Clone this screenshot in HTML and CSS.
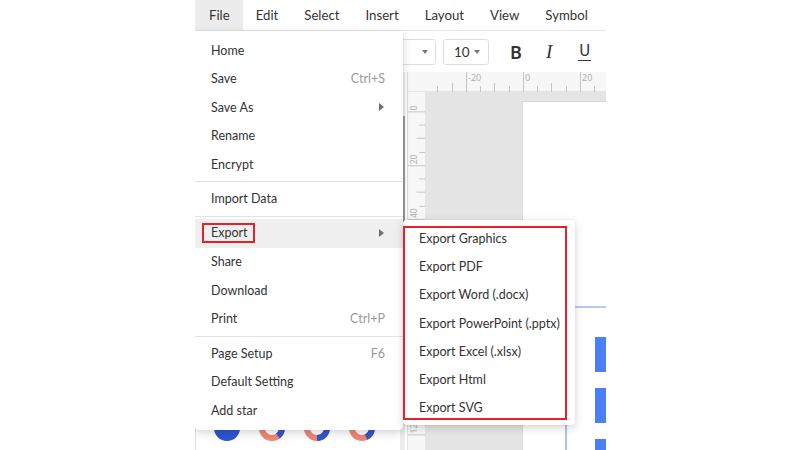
FILE: index.html
```html
<!DOCTYPE html>
<html>
<head>
<meta charset="utf-8">
<link rel="stylesheet" href="styles.css">
</head>
<body>
<div class="app">
  <div class="menubar">
    <span class="mtab active">File</span>
    <span class="mtab">Edit</span>
    <span class="mtab">Select</span>
    <span class="mtab">Insert</span>
    <span class="mtab">Layout</span>
    <span class="mtab">View</span>
    <span class="mtab">Symbol</span>
  </div>
  <div class="toolbar">
    <div class="select font-select"><span class="caret"></span></div>
    <div class="select size-select"><span class="val">10</span><span class="caret"></span></div>
    <span class="tbtn bold">B</span>
    <span class="tbtn italic">I</span>
    <span class="tbtn under">U</span>
  </div>
  <div class="main">
    <div class="panel">
      <div class="panel-content">
        <div class="shapes">
          <svg class="shape" viewBox="0 0 28 28"><circle cx="14" cy="14" r="13" fill="#2d57cf"/><path d="M14 1a13 13 0 0 1 13 13h-13z" fill="#6d8fe6"/></svg>
          <svg class="shape" viewBox="0 0 28 28"><circle cx="14" cy="14" r="10" fill="none" stroke="#ef8676" stroke-width="6"/><path d="M24 14a10 10 0 0 1-4 8" fill="none" stroke="#3358cc" stroke-width="6"/></svg>
          <svg class="shape" viewBox="0 0 28 28"><circle cx="14" cy="14" r="10" fill="none" stroke="#ef8676" stroke-width="6"/><path d="M24 14a10 10 0 0 1-10 10" fill="none" stroke="#3358cc" stroke-width="6"/><path d="M4 14a10 10 0 0 1 3-7" fill="none" stroke="#f2b25a" stroke-width="6"/></svg>
          <svg class="shape" viewBox="0 0 28 28"><circle cx="14" cy="14" r="10" fill="none" stroke="#ef8676" stroke-width="6"/><path d="M24 14a10 10 0 0 1-6 9" fill="none" stroke="#3358cc" stroke-width="6"/></svg>
        </div>
      </div>
      <div class="scrolltrack"><div class="thumb"></div></div>
    </div>
    <div class="stage">
      <div class="ruler-row">
        <div class="corner"></div>
        <svg class="hruler" width="181" height="20" viewBox="0 0 181 20">
          <g stroke="#c4c4c4" stroke-width="1">
            <line x1="12.5" y1="14" x2="12.5" y2="20"/>
            <line x1="27.5" y1="11" x2="27.5" y2="20"/>
            <line x1="41.5" y1="0" x2="41.5" y2="20"/>
            <line x1="55.5" y1="14" x2="55.5" y2="20"/>
            <line x1="69.5" y1="11" x2="69.5" y2="20"/>
            <line x1="84.5" y1="14" x2="84.5" y2="20"/>
            <line x1="98.5" y1="0" x2="98.5" y2="20"/>
            <line x1="112.5" y1="14" x2="112.5" y2="20"/>
            <line x1="126.5" y1="11" x2="126.5" y2="20"/>
            <line x1="141.5" y1="14" x2="141.5" y2="20"/>
            <line x1="155.5" y1="0" x2="155.5" y2="20"/>
            <line x1="169.5" y1="14" x2="169.5" y2="20"/>
          </g>
          <g class="rtext">
            <text x="43" y="9">-20</text>
            <text x="100" y="9">0</text>
            <text x="157" y="9">20</text>
          </g>
        </svg>
      </div>
      <div class="canvas-row">
        <svg class="vruler" width="18" height="358" viewBox="0 0 18 358">
          <g stroke="#c4c4c4" stroke-width="1">
            <line x1="0" y1="10.5" x2="18" y2="10.5"/>
            <line x1="12" y1="24.5" x2="18" y2="24.5"/>
            <line x1="9" y1="38.5" x2="18" y2="38.5"/>
            <line x1="12" y1="53.5" x2="18" y2="53.5"/>
            <line x1="0" y1="67.5" x2="18" y2="67.5"/>
            <line x1="12" y1="81.5" x2="18" y2="81.5"/>
            <line x1="9" y1="95.5" x2="18" y2="95.5"/>
            <line x1="12" y1="110.5" x2="18" y2="110.5"/>
            <line x1="0" y1="124.5" x2="18" y2="124.5"/>
            <line x1="12" y1="138.5" x2="18" y2="138.5"/>
            <line x1="9" y1="152.5" x2="18" y2="152.5"/>
            <line x1="12" y1="167.5" x2="18" y2="167.5"/>
            <line x1="0" y1="181.5" x2="18" y2="181.5"/>
            <line x1="12" y1="195.5" x2="18" y2="195.5"/>
            <line x1="9" y1="209.5" x2="18" y2="209.5"/>
            <line x1="12" y1="224.5" x2="18" y2="224.5"/>
            <line x1="0" y1="238.5" x2="18" y2="238.5"/>
            <line x1="12" y1="252.5" x2="18" y2="252.5"/>
            <line x1="9" y1="266.5" x2="18" y2="266.5"/>
            <line x1="12" y1="281.5" x2="18" y2="281.5"/>
            <line x1="0" y1="295.5" x2="18" y2="295.5"/>
            <line x1="12" y1="309.5" x2="18" y2="309.5"/>
            <line x1="9" y1="323.5" x2="18" y2="323.5"/>
            <line x1="12" y1="338.5" x2="18" y2="338.5"/>
            <line x1="0" y1="352.5" x2="18" y2="352.5"/>
          </g>
          <g class="rtext">
            <text transform="translate(9 9) rotate(-90)">0</text>
            <text transform="translate(9 66) rotate(-90)">20</text>
            <text transform="translate(9 123) rotate(-90)">40</text>
            <text transform="translate(9 351) rotate(-90)">120</text>
          </g>
        </svg>
        <div class="canvas">
          <div class="page">
            <div class="dline"></div>
            <div class="vline"></div>
            <div class="dbox b1"></div>
            <div class="dbox b2"></div>
            <div class="dbox b3"></div>
          </div>
        </div>
      </div>
    </div>
  </div>

  <div class="dropdown">
    <div class="mi"><span>Home</span></div>
    <div class="mi"><span>Save</span><span class="kbd">Ctrl+S</span></div>
    <div class="mi"><span>Save As</span><span class="arrow"></span></div>
    <div class="mi"><span>Rename</span></div>
    <div class="mi"><span>Encrypt</span></div>
    <div class="sep"></div>
    <div class="mi"><span>Import Data</span></div>
    <div class="sep"></div>
    <div class="mi hover"><span class="mark">Export</span><span class="arrow"></span></div>
    <div class="mi"><span>Share</span></div>
    <div class="mi"><span>Download</span></div>
    <div class="mi"><span>Print</span><span class="kbd">Ctrl+P</span></div>
    <div class="sep"></div>
    <div class="mi"><span>Page Setup</span><span class="kbd">F6</span></div>
    <div class="mi"><span>Default Setting</span></div>
    <div class="mi"><span>Add star</span></div>
  </div>

  <div class="submenu">
    <div class="si">Export Graphics</div>
    <div class="si">Export PDF</div>
    <div class="si">Export Word (.docx)</div>
    <div class="si">Export PowerPoint (.pptx)</div>
    <div class="si">Export Excel (.xlsx)</div>
    <div class="si">Export Html</div>
    <div class="si">Export SVG</div>
    <div class="redbox"></div>
  </div>
</div>
</body>
</html>
```

FILE: styles.css
```css
* { box-sizing: border-box; }
html, body {
  margin: 0;
  padding: 0;
  background: #fff;
}
body {
  width: 800px;
  height: 450px;
  overflow: hidden;
  font-family: "Lato", "Noto Sans", sans-serif;
  color: #333;
}
.app {
  position: relative;
  margin-left: 195px;
  width: 411px;
  height: 450px;
  display: flex;
  flex-direction: column;
  overflow: hidden;
}
.menubar {
  height: 31px;
  flex: none;
  display: flex;
  border-bottom: 1px solid #e6e6e6;
  font-size: 13.2px;
}
.mtab {
  padding: 0 13px;
  line-height: 30px;
  color: #333;
}
.mtab.active { background: #ececec; padding-left: 14px; }

.toolbar {
  height: 41px;
  flex: none;
  display: flex;
  align-items: center;
  padding-top: 1px;
}
.select {
  height: 26px;
  flex: none;
  border: 1px solid #dedede;
  border-radius: 3px;
  display: flex;
  align-items: center;
}
.font-select { width: 100px; margin-left: 141px; justify-content: flex-end; padding-right: 7px; }
.size-select { width: 46px; margin-left: 7px; padding-left: 10px; font-size: 13.5px; }
.size-select .val { flex: 1; }
.size-select .caret { margin-right: 8px; }
.caret {
  width: 0; height: 0;
  border-left: 3.5px solid transparent;
  border-right: 3.5px solid transparent;
  border-top: 4px solid #777;
}
.tbtn {
  font-size: 18px;
  color: #333;
  line-height: 20px;
}
.bold { margin-left: 21px; font-weight: 600; font-family: "Noto Sans", sans-serif; }
.italic { margin-left: 24px; font-family: "Liberation Serif", serif; font-style: italic; font-size: 19px; }
.under { margin-left: 26px; font-family: "DejaVu Sans", sans-serif; font-size: 15px; border-bottom: 1.5px solid #333; line-height: 15px; padding: 0 1px 1px; }

.main {
  flex: 1;
  display: flex;
  min-height: 0;
}
.panel {
  flex: none;
  width: 212px;
  display: flex;
  border-left: 1px solid #e2e2e2;
  background: #fff;
}
.panel-content {
  flex: 1;
  display: flex;
  flex-direction: column;
  justify-content: flex-end;
}
.shapes {
  display: flex;
  gap: 17px;
  padding: 0 0 8px 17px;
}
.shape { width: 28px; height: 28px; display: block; }
.scrolltrack {
  width: 5px;
  background: #ececec;
  margin-right: 2px;
  padding-top: 44px;
}
.thumb {
  height: 245px;
  background: #9c9c9c;
}

.stage {
  flex: none;
  width: 199px;
  display: flex;
  flex-direction: column;
}
.ruler-row { flex: none; display: flex; height: 20px; background: #f7f7f7; border-bottom: 1px solid #e4e4e4; border-left: 1px solid #e0e0e0; }
.corner { width: 17px; flex: none; }
.hruler, .vruler { display: block; flex: none; }
.rtext { font-size: 9px; fill: #b0b0b0; font-family: "Noto Sans", sans-serif; }
.canvas-row { flex: 1; display: flex; min-height: 0; }
.vruler { background: #f7f7f7; border-left: 1px solid #e0e0e0; box-sizing: content-box; width: 17px; }
.canvas {
  flex: 1;
  background: #e5e5e5;
  padding: 9px 0 0 97px;
  display: flex;
  overflow: hidden;
}
.page {
  flex: 1;
  background: #fff;
  position: relative;
  border-left: 1px solid #d9d9d9;
  border-top: 1px solid #d9d9d9;
}
.dline {
  position: absolute;
  left: 52px; top: 204px;
  width: 40px; height: 2px;
  background: #b3cbf7;
}
.vline {
  position: absolute;
  left: 42px; top: 322px;
  width: 1.5px; height: 40px;
  background: #a9c2f3;
}
.dbox {
  position: absolute;
  left: 72px;
  width: 20px;
  height: 35px;
  background: #4a80f7;
}
.b1 { top: 235px; }
.b2 { top: 286px; }
.b3 { top: 337px; }

.dropdown {
  position: absolute;
  left: 0;
  top: 31px;
  width: 208px;
  background: #fff;
  padding: 5px 0 5.5px;
  border-radius: 0 0 4px 4px;
  box-shadow: 0 3px 10px rgba(0,0,0,0.16), 0 0 2px rgba(0,0,0,0.08);
  font-size: 12.5px;
}
.mi {
  height: 28.5px;
  display: flex;
  align-items: center;
  justify-content: space-between;
  padding: 0 18px 0 16px;
  color: #333;
}
.mi.hover { background: #efefef; }
.kbd { color: #9a9a9a; }
.arrow {
  width: 0; height: 0;
  border-top: 4.5px solid transparent;
  border-bottom: 4.5px solid transparent;
  border-left: 5px solid #6f6f6f;
  margin-right: 1px;
}
.sep {
  height: 1px;
  background: #e3e3e3;
  margin: 2.5px 0;
}
.mark {
  border: 2px solid #e3222c;
  padding: 0 5px 0 7px;
  margin-left: -9px;
  line-height: 16px;
}

.submenu {
  position: absolute;
  left: 208px;
  top: 220px;
  width: 172px;
  background: #fff;
  border-radius: 4px;
  padding: 4px 0 3px;
  box-shadow: 0 3px 10px rgba(0,0,0,0.16), 0 0 2px rgba(0,0,0,0.08);
  font-size: 12.5px;
}
.si {
  height: 28.3px;
  display: flex;
  align-items: center;
  padding-left: 16px;
  color: #333;
}
.redbox {
  position: absolute;
  left: 0;
  top: 6px;
  width: 164px;
  height: 194px;
  border: 2px solid #e3222c;
}
```
